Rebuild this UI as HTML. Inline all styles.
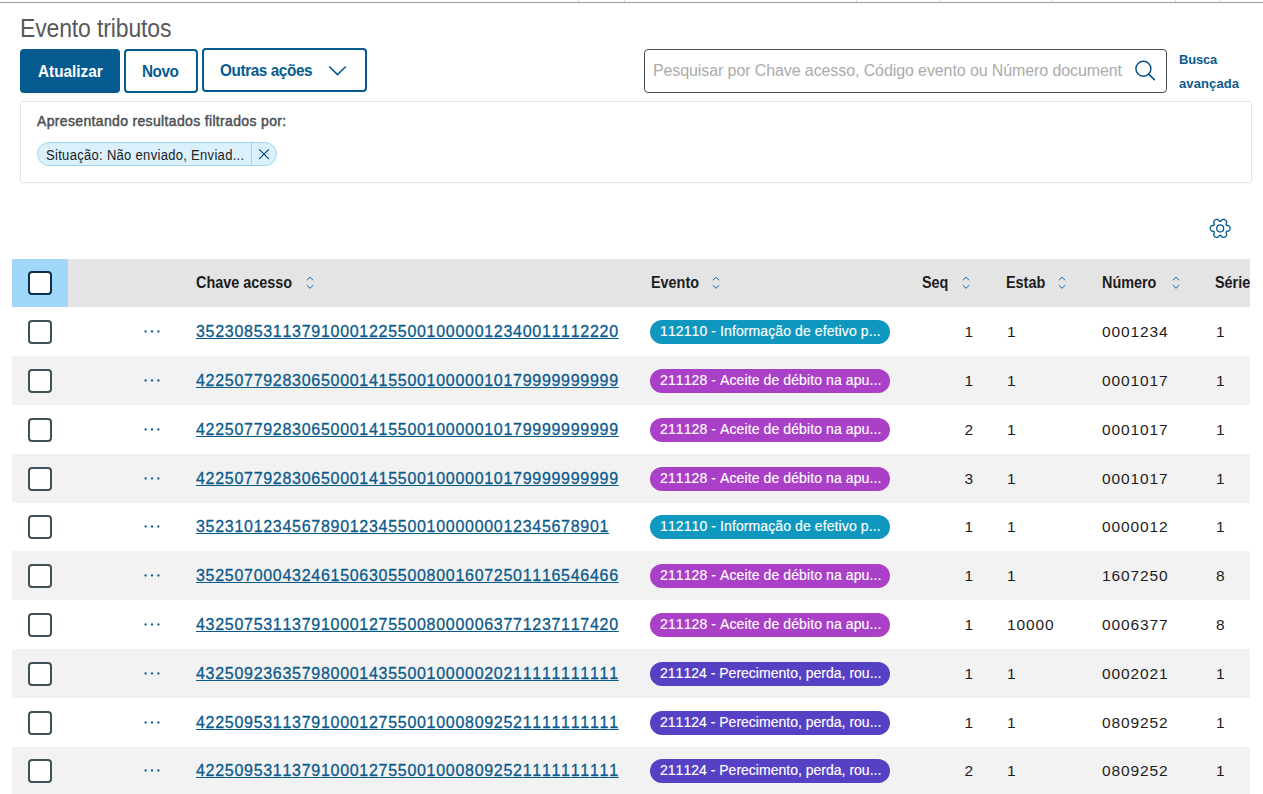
<!DOCTYPE html><html><head><meta charset="utf-8"><title>Evento tributos</title><style>
*{margin:0;padding:0;box-sizing:border-box}
html,body{width:1263px;height:794px;overflow:hidden;background:#fff}
body{position:relative;font-kerning:none;font-family:"Liberation Sans",sans-serif;color:#1c1c1c}
.a{position:absolute;white-space:nowrap}
.btn{position:absolute;top:49px;height:44px;border:2px solid #055b8f;border-radius:4px;background:#fff}
.cb{position:absolute;width:24px;height:24px;border:2px solid #3f5057;border-radius:4px;background:#fff}
.rowbg{position:absolute;left:12px;width:1238px;background:#f2f2f2}
.hd{font-size:16px;line-height:16px;font-weight:bold;color:#1c1c1c;transform:scaleX(0.9);transform-origin:0 0}
.lnk{font-size:16px;line-height:16px;color:#0b5a8c;text-decoration:underline;text-underline-offset:1px;text-decoration-thickness:1px;letter-spacing:0.71px;-webkit-text-stroke:0.3px #0b5a8c}
.val{font-size:15.5px;line-height:16px;color:#1c1c1c;letter-spacing:0.9px}
.tag{position:absolute;left:650px;width:240px;height:24px;border-radius:12px;color:#fff;font-size:14px;line-height:22px;padding-left:10px;letter-spacing:0.1px;white-space:nowrap;overflow:hidden;-webkit-text-stroke:0.15px #fff}
.dots{position:absolute;left:144px;width:16px;height:3px}
.dots i{position:absolute;top:0;width:2.2px;height:2.2px;border-radius:50%;background:#0b5a8c}
</style></head><body>
<div class="a" style="left:0;top:2px;width:1263px;height:1px;background:#9c9c9c"></div>
<div class="a" style="left:578px;top:0;width:1px;height:2px;background:#d6d6d6"></div>
<div class="a" style="left:624px;top:0;width:1px;height:2px;background:#d6d6d6"></div>
<div class="a" style="left:856px;top:0;width:1px;height:2px;background:#d6d6d6"></div>
<div class="a" style="left:940px;top:0;width:1px;height:2px;background:#d6d6d6"></div>
<div class="a" style="left:1051px;top:0;width:1px;height:2px;background:#d6d6d6"></div>
<div class="a" style="left:1175px;top:0;width:1px;height:2px;background:#d6d6d6"></div>
<div class="a" style="left:1220px;top:0;width:1px;height:2px;background:#d6d6d6"></div>
<div class="a" style="left:20px;top:15.53px;font-size:25px;line-height:25px;color:#595959;letter-spacing:-0.15px;transform:scaleX(0.92);transform-origin:0 0">Evento tributos</div>
<div class="btn" style="left:20px;width:100px;background:#055b8f"></div>
<div class="a" style="left:37.5px;top:62.81px;font-size:17px;line-height:17px;font-weight:bold;color:#fff;letter-spacing:0px;transform:scaleX(0.9);transform-origin:0 0">Atualizar</div>
<div class="btn" style="left:124px;width:74px"></div>
<div class="a" style="left:142px;top:62.81px;font-size:17px;line-height:17px;font-weight:bold;color:#055b8f;letter-spacing:-0.5px;transform:scaleX(0.9);transform-origin:0 0">Novo</div>
<div class="btn" style="left:202px;top:48px;width:165px"></div>
<div class="a" style="left:220px;top:62.31px;font-size:17px;line-height:17px;font-weight:bold;color:#055b8f;letter-spacing:-0.45px;transform:scaleX(0.9);transform-origin:0 0">Outras ações</div>
<svg class="a" style="left:328px;top:65px" width="19" height="11" viewBox="0 0 19 11"><path d="M1.2 1.5 L9.5 9.6 L17.8 1.5" fill="none" stroke="#055b8f" stroke-width="1.6"/></svg>
<div class="a" style="left:644px;top:49px;width:523px;height:44px;border:1px solid #4d4d4d;border-radius:4px"></div>
<div class="a" style="left:653px;top:63.05px;font-size:16px;line-height:16px;color:#ababab;letter-spacing:-0.1px">Pesquisar por Chave acesso, Código evento ou Número document</div>
<svg class="a" style="left:1133px;top:59px" width="24" height="24" viewBox="0 0 24 24"><circle cx="10.4" cy="9.8" r="7.5" fill="none" stroke="#044d84" stroke-width="1.4"/><path d="M15.7 15.1 L21.3 20.6" stroke="#044d84" stroke-width="1.6" stroke-linecap="round"/></svg>
<div class="a" style="left:1179px;top:52.99px;font-size:13px;line-height:13px;font-weight:bold;color:#0b5a8c;letter-spacing:-0.2px">Busca</div>
<div class="a" style="left:1179px;top:76.99px;font-size:13px;line-height:13px;font-weight:bold;color:#0b5a8c;letter-spacing:0.12px">avançada</div>
<div class="a" style="left:20px;top:101px;width:1232px;height:82px;border:1px solid #e3e3e3;border-radius:3px"></div>
<div class="a" style="left:37px;top:114.35px;font-size:14px;line-height:14px;color:#4a4f52;letter-spacing:0.34px;-webkit-text-stroke:0.45px #4a4f52">Apresentando resultados filtrados por:</div>
<div class="a" style="left:37px;top:142px;width:240px;height:24px;border:1px solid #9fd4ef;border-radius:12px;background:#daf1fc"></div>
<div class="a" style="left:251px;top:143px;width:1px;height:22px;background:#9fd4ef"></div>
<div class="a" style="left:46px;top:147.55px;font-size:14px;line-height:14px;color:#1c1c1c;letter-spacing:0.32px;transform:scaleX(0.93);transform-origin:0 0">Situação: Não enviado, Enviad...</div>
<svg class="a" style="left:257px;top:148px" width="14" height="14" viewBox="0 0 14 14"><path d="M2.2 1.3 L11.8 10.8 M11.8 1.3 L2.2 10.8" stroke="#053f74" stroke-width="1.15"/></svg>
<svg class="a" style="left:1208px;top:217px" width="24" height="24" viewBox="0 0 24 24"><path fill="none" stroke="#055b8f" stroke-width="1.3" stroke-linejoin="round" d="M22.10 11.40 L22.10 11.31 L22.10 11.23 L22.09 11.14 L22.08 11.05 L22.07 10.97 L22.06 10.88 L22.04 10.80 L22.02 10.71 L22.00 10.63 L21.98 10.54 L21.96 10.46 L21.93 10.38 L21.90 10.29 L21.87 10.21 L21.83 10.13 L21.80 10.05 L21.76 9.97 L21.72 9.89 L21.67 9.82 L21.62 9.74 L21.57 9.66 L21.52 9.59 L21.47 9.51 L21.41 9.44 L21.35 9.37 L21.28 9.30 L21.22 9.24 L21.15 9.17 L21.07 9.10 L21.00 9.04 L20.92 8.98 L20.83 8.92 L20.75 8.87 L20.66 8.81 L20.56 8.76 L20.46 8.72 L20.35 8.67 L20.24 8.63 L20.13 8.59 L20.00 8.56 L19.87 8.53 L19.72 8.51 L19.56 8.50 L19.37 8.50 L19.15 8.52 L18.74 8.63 L18.71 8.57 L18.69 8.51 L18.66 8.46 L18.63 8.40 L18.61 8.34 L18.58 8.29 L18.55 8.23 L18.53 8.18 L18.50 8.12 L18.47 8.07 L18.44 8.01 L18.41 7.96 L18.38 7.90 L18.35 7.85 L18.32 7.80 L18.29 7.74 L18.25 7.69 L18.22 7.64 L18.19 7.59 L18.15 7.53 L18.12 7.48 L18.09 7.43 L18.05 7.38 L18.02 7.33 L17.98 7.28 L17.94 7.23 L17.91 7.18 L17.87 7.13 L18.17 6.82 L18.30 6.64 L18.39 6.48 L18.46 6.33 L18.51 6.19 L18.56 6.06 L18.59 5.94 L18.62 5.82 L18.64 5.70 L18.65 5.59 L18.66 5.48 L18.67 5.37 L18.67 5.26 L18.66 5.16 L18.65 5.06 L18.64 4.96 L18.62 4.86 L18.61 4.77 L18.58 4.67 L18.56 4.58 L18.53 4.49 L18.50 4.40 L18.47 4.32 L18.43 4.23 L18.39 4.15 L18.35 4.07 L18.31 3.99 L18.26 3.91 L18.22 3.84 L18.17 3.76 L18.12 3.69 L18.06 3.62 L18.01 3.55 L17.95 3.48 L17.89 3.42 L17.83 3.36 L17.77 3.29 L17.71 3.23 L17.64 3.18 L17.58 3.12 L17.51 3.07 L17.44 3.02 L17.37 2.96 L17.30 2.92 L17.22 2.87 L17.15 2.83 L17.07 2.78 L17.00 2.74 L16.92 2.71 L16.84 2.67 L16.76 2.64 L16.68 2.60 L16.60 2.58 L16.52 2.55 L16.43 2.52 L16.35 2.50 L16.27 2.48 L16.18 2.46 L16.09 2.45 L16.01 2.43 L15.92 2.42 L15.83 2.41 L15.74 2.41 L15.65 2.41 L15.56 2.41 L15.47 2.41 L15.38 2.41 L15.29 2.42 L15.20 2.43 L15.11 2.45 L15.02 2.46 L14.93 2.48 L14.83 2.51 L14.74 2.54 L14.65 2.57 L14.56 2.60 L14.47 2.64 L14.37 2.68 L14.28 2.73 L14.19 2.78 L14.10 2.84 L14.01 2.90 L13.91 2.97 L13.82 3.05 L13.73 3.13 L13.64 3.23 L13.55 3.33 L13.46 3.44 L13.37 3.58 L13.28 3.74 L13.18 3.94 L13.07 4.35 L13.00 4.35 L12.94 4.34 L12.88 4.33 L12.82 4.33 L12.76 4.32 L12.70 4.32 L12.63 4.31 L12.57 4.31 L12.51 4.31 L12.45 4.30 L12.39 4.30 L12.32 4.30 L12.26 4.30 L12.20 4.30 L12.14 4.30 L12.08 4.30 L12.01 4.30 L11.95 4.30 L11.89 4.31 L11.83 4.31 L11.77 4.31 L11.70 4.32 L11.64 4.32 L11.58 4.33 L11.52 4.33 L11.46 4.34 L11.40 4.35 L11.33 4.35 L11.22 3.94 L11.12 3.74 L11.03 3.58 L10.94 3.44 L10.85 3.33 L10.76 3.23 L10.67 3.13 L10.58 3.05 L10.49 2.97 L10.39 2.90 L10.30 2.84 L10.21 2.78 L10.12 2.73 L10.03 2.68 L9.93 2.64 L9.84 2.60 L9.75 2.57 L9.66 2.54 L9.57 2.51 L9.47 2.48 L9.38 2.46 L9.29 2.45 L9.20 2.43 L9.11 2.42 L9.02 2.41 L8.93 2.41 L8.84 2.41 L8.75 2.41 L8.66 2.41 L8.57 2.41 L8.48 2.42 L8.39 2.43 L8.31 2.45 L8.22 2.46 L8.13 2.48 L8.05 2.50 L7.97 2.52 L7.88 2.55 L7.80 2.58 L7.72 2.60 L7.64 2.64 L7.56 2.67 L7.48 2.71 L7.40 2.74 L7.33 2.78 L7.25 2.83 L7.18 2.87 L7.10 2.92 L7.03 2.96 L6.96 3.02 L6.89 3.07 L6.82 3.12 L6.76 3.18 L6.69 3.23 L6.63 3.29 L6.57 3.36 L6.51 3.42 L6.45 3.48 L6.39 3.55 L6.34 3.62 L6.28 3.69 L6.23 3.76 L6.18 3.84 L6.14 3.91 L6.09 3.99 L6.05 4.07 L6.01 4.15 L5.97 4.23 L5.93 4.32 L5.90 4.40 L5.87 4.49 L5.84 4.58 L5.82 4.67 L5.79 4.77 L5.78 4.86 L5.76 4.96 L5.75 5.06 L5.74 5.16 L5.73 5.26 L5.73 5.37 L5.74 5.48 L5.75 5.59 L5.76 5.70 L5.78 5.82 L5.81 5.94 L5.84 6.06 L5.89 6.19 L5.94 6.33 L6.01 6.48 L6.10 6.64 L6.23 6.82 L6.53 7.13 L6.49 7.18 L6.46 7.23 L6.42 7.28 L6.38 7.33 L6.35 7.38 L6.31 7.43 L6.28 7.48 L6.25 7.53 L6.21 7.59 L6.18 7.64 L6.15 7.69 L6.11 7.74 L6.08 7.80 L6.05 7.85 L6.02 7.90 L5.99 7.96 L5.96 8.01 L5.93 8.07 L5.90 8.12 L5.87 8.18 L5.85 8.23 L5.82 8.29 L5.79 8.34 L5.77 8.40 L5.74 8.46 L5.71 8.51 L5.69 8.57 L5.66 8.63 L5.25 8.52 L5.03 8.50 L4.84 8.50 L4.68 8.51 L4.53 8.53 L4.40 8.56 L4.27 8.59 L4.16 8.63 L4.05 8.67 L3.94 8.72 L3.84 8.76 L3.74 8.81 L3.65 8.87 L3.57 8.92 L3.48 8.98 L3.40 9.04 L3.33 9.10 L3.25 9.17 L3.18 9.24 L3.12 9.30 L3.05 9.37 L2.99 9.44 L2.93 9.51 L2.88 9.59 L2.83 9.66 L2.78 9.74 L2.73 9.82 L2.68 9.89 L2.64 9.97 L2.60 10.05 L2.57 10.13 L2.53 10.21 L2.50 10.29 L2.47 10.38 L2.44 10.46 L2.42 10.54 L2.40 10.63 L2.38 10.71 L2.36 10.80 L2.34 10.88 L2.33 10.97 L2.32 11.05 L2.31 11.14 L2.30 11.23 L2.30 11.31 L2.30 11.40 L2.30 11.49 L2.30 11.57 L2.31 11.66 L2.32 11.75 L2.33 11.83 L2.34 11.92 L2.36 12.00 L2.38 12.09 L2.40 12.17 L2.42 12.26 L2.44 12.34 L2.47 12.42 L2.50 12.51 L2.53 12.59 L2.57 12.67 L2.60 12.75 L2.64 12.83 L2.68 12.91 L2.73 12.98 L2.78 13.06 L2.83 13.14 L2.88 13.21 L2.93 13.29 L2.99 13.36 L3.05 13.43 L3.12 13.50 L3.18 13.56 L3.25 13.63 L3.33 13.70 L3.40 13.76 L3.48 13.82 L3.57 13.88 L3.65 13.93 L3.74 13.99 L3.84 14.04 L3.94 14.08 L4.05 14.13 L4.16 14.17 L4.27 14.21 L4.40 14.24 L4.53 14.27 L4.68 14.29 L4.84 14.30 L5.03 14.30 L5.25 14.28 L5.66 14.17 L5.69 14.23 L5.71 14.29 L5.74 14.34 L5.77 14.40 L5.79 14.46 L5.82 14.51 L5.85 14.57 L5.87 14.62 L5.90 14.68 L5.93 14.73 L5.96 14.79 L5.99 14.84 L6.02 14.90 L6.05 14.95 L6.08 15.00 L6.11 15.06 L6.15 15.11 L6.18 15.16 L6.21 15.21 L6.25 15.27 L6.28 15.32 L6.31 15.37 L6.35 15.42 L6.38 15.47 L6.42 15.52 L6.46 15.57 L6.49 15.62 L6.53 15.67 L6.23 15.98 L6.10 16.16 L6.01 16.32 L5.94 16.47 L5.89 16.61 L5.84 16.74 L5.81 16.86 L5.78 16.98 L5.76 17.10 L5.75 17.21 L5.74 17.32 L5.73 17.43 L5.73 17.54 L5.74 17.64 L5.75 17.74 L5.76 17.84 L5.78 17.94 L5.79 18.03 L5.82 18.13 L5.84 18.22 L5.87 18.31 L5.90 18.40 L5.93 18.48 L5.97 18.57 L6.01 18.65 L6.05 18.73 L6.09 18.81 L6.14 18.89 L6.18 18.96 L6.23 19.04 L6.28 19.11 L6.34 19.18 L6.39 19.25 L6.45 19.32 L6.51 19.38 L6.57 19.44 L6.63 19.51 L6.69 19.57 L6.76 19.62 L6.82 19.68 L6.89 19.73 L6.96 19.78 L7.03 19.84 L7.10 19.88 L7.18 19.93 L7.25 19.97 L7.33 20.02 L7.40 20.06 L7.48 20.09 L7.56 20.13 L7.64 20.16 L7.72 20.20 L7.80 20.22 L7.88 20.25 L7.97 20.28 L8.05 20.30 L8.13 20.32 L8.22 20.34 L8.31 20.35 L8.39 20.37 L8.48 20.38 L8.57 20.39 L8.66 20.39 L8.75 20.39 L8.84 20.39 L8.93 20.39 L9.02 20.39 L9.11 20.38 L9.20 20.37 L9.29 20.35 L9.38 20.34 L9.47 20.32 L9.57 20.29 L9.66 20.26 L9.75 20.23 L9.84 20.20 L9.93 20.16 L10.03 20.12 L10.12 20.07 L10.21 20.02 L10.30 19.96 L10.39 19.90 L10.49 19.83 L10.58 19.75 L10.67 19.67 L10.76 19.57 L10.85 19.47 L10.94 19.36 L11.03 19.22 L11.12 19.06 L11.22 18.86 L11.33 18.45 L11.40 18.45 L11.46 18.46 L11.52 18.47 L11.58 18.47 L11.64 18.48 L11.70 18.48 L11.77 18.49 L11.83 18.49 L11.89 18.49 L11.95 18.50 L12.01 18.50 L12.08 18.50 L12.14 18.50 L12.20 18.50 L12.26 18.50 L12.32 18.50 L12.39 18.50 L12.45 18.50 L12.51 18.49 L12.57 18.49 L12.63 18.49 L12.70 18.48 L12.76 18.48 L12.82 18.47 L12.88 18.47 L12.94 18.46 L13.00 18.45 L13.07 18.45 L13.18 18.86 L13.28 19.06 L13.37 19.22 L13.46 19.36 L13.55 19.47 L13.64 19.57 L13.73 19.67 L13.82 19.75 L13.91 19.83 L14.01 19.90 L14.10 19.96 L14.19 20.02 L14.28 20.07 L14.37 20.12 L14.47 20.16 L14.56 20.20 L14.65 20.23 L14.74 20.26 L14.83 20.29 L14.93 20.32 L15.02 20.34 L15.11 20.35 L15.20 20.37 L15.29 20.38 L15.38 20.39 L15.47 20.39 L15.56 20.39 L15.65 20.39 L15.74 20.39 L15.83 20.39 L15.92 20.38 L16.01 20.37 L16.09 20.35 L16.18 20.34 L16.27 20.32 L16.35 20.30 L16.43 20.28 L16.52 20.25 L16.60 20.22 L16.68 20.20 L16.76 20.16 L16.84 20.13 L16.92 20.09 L17.00 20.06 L17.07 20.02 L17.15 19.97 L17.22 19.93 L17.30 19.88 L17.37 19.84 L17.44 19.78 L17.51 19.73 L17.58 19.68 L17.64 19.62 L17.71 19.57 L17.77 19.51 L17.83 19.44 L17.89 19.38 L17.95 19.32 L18.01 19.25 L18.06 19.18 L18.12 19.11 L18.17 19.04 L18.22 18.96 L18.26 18.89 L18.31 18.81 L18.35 18.73 L18.39 18.65 L18.43 18.57 L18.47 18.48 L18.50 18.40 L18.53 18.31 L18.56 18.22 L18.58 18.13 L18.61 18.03 L18.62 17.94 L18.64 17.84 L18.65 17.74 L18.66 17.64 L18.67 17.54 L18.67 17.43 L18.66 17.32 L18.65 17.21 L18.64 17.10 L18.62 16.98 L18.59 16.86 L18.56 16.74 L18.51 16.61 L18.46 16.47 L18.39 16.32 L18.30 16.16 L18.17 15.98 L17.87 15.67 L17.91 15.62 L17.94 15.57 L17.98 15.52 L18.02 15.47 L18.05 15.42 L18.09 15.37 L18.12 15.32 L18.15 15.27 L18.19 15.21 L18.22 15.16 L18.25 15.11 L18.29 15.06 L18.32 15.00 L18.35 14.95 L18.38 14.90 L18.41 14.84 L18.44 14.79 L18.47 14.73 L18.50 14.68 L18.53 14.62 L18.55 14.57 L18.58 14.51 L18.61 14.46 L18.63 14.40 L18.66 14.34 L18.69 14.29 L18.71 14.23 L18.74 14.17 L19.15 14.28 L19.37 14.30 L19.56 14.30 L19.72 14.29 L19.87 14.27 L20.00 14.24 L20.13 14.21 L20.24 14.17 L20.35 14.13 L20.46 14.08 L20.56 14.04 L20.66 13.99 L20.75 13.93 L20.83 13.88 L20.92 13.82 L21.00 13.76 L21.07 13.70 L21.15 13.63 L21.22 13.56 L21.28 13.50 L21.35 13.43 L21.41 13.36 L21.47 13.29 L21.52 13.21 L21.57 13.14 L21.62 13.06 L21.67 12.98 L21.72 12.91 L21.76 12.83 L21.80 12.75 L21.83 12.67 L21.87 12.59 L21.90 12.51 L21.93 12.42 L21.96 12.34 L21.98 12.26 L22.00 12.17 L22.02 12.09 L22.04 12.00 L22.06 11.92 L22.07 11.83 L22.08 11.75 L22.09 11.66 L22.10 11.57 L22.10 11.49Z"/><circle cx="12.2" cy="11.4" r="3.45" fill="none" stroke="#055b8f" stroke-width="1.3"/></svg>
<div class="a" style="left:12px;top:259px;width:1238px;height:48px;background:#e4e4e4"></div>
<div class="a" style="left:12px;top:259px;width:56px;height:48px;background:#9fd8fa"></div>
<div class="cb" style="left:28px;top:271px;border-color:#0b2e4c"></div>
<div class="a hd" style="left:196px;top:274.95px">Chave acesso</div>
<svg class="a" style="left:306px;top:276px" width="8" height="14" viewBox="0 0 8 14"><path d="M0.8 4.3 L4 1.2 L7.2 4.3 M0.8 9.2 L4 12.3 L7.2 9.2" fill="none" stroke="#1a68a6" stroke-width="1.0"/></svg>
<div class="a hd" style="left:651px;top:274.95px">Evento</div>
<svg class="a" style="left:712px;top:276px" width="8" height="14" viewBox="0 0 8 14"><path d="M0.8 4.3 L4 1.2 L7.2 4.3 M0.8 9.2 L4 12.3 L7.2 9.2" fill="none" stroke="#1a68a6" stroke-width="1.0"/></svg>
<div class="a hd" style="left:922px;top:274.95px">Seq</div>
<svg class="a" style="left:962px;top:276px" width="8" height="14" viewBox="0 0 8 14"><path d="M0.8 4.3 L4 1.2 L7.2 4.3 M0.8 9.2 L4 12.3 L7.2 9.2" fill="none" stroke="#1a68a6" stroke-width="1.0"/></svg>
<div class="a hd" style="left:1006px;top:274.95px">Estab</div>
<svg class="a" style="left:1058px;top:276px" width="8" height="14" viewBox="0 0 8 14"><path d="M0.8 4.3 L4 1.2 L7.2 4.3 M0.8 9.2 L4 12.3 L7.2 9.2" fill="none" stroke="#1a68a6" stroke-width="1.0"/></svg>
<div class="a hd" style="left:1102px;top:274.95px">Número</div>
<svg class="a" style="left:1172px;top:276px" width="8" height="14" viewBox="0 0 8 14"><path d="M0.8 4.3 L4 1.2 L7.2 4.3 M0.8 9.2 L4 12.3 L7.2 9.2" fill="none" stroke="#1a68a6" stroke-width="1.0"/></svg>
<div class="a hd" style="left:1215px;top:274.95px">Série</div>
<div class="cb" style="left:28px;top:320px"></div>
<svg class="a" style="left:140px;top:327px" width="24" height="10" viewBox="0 0 24 10"><circle cx="5.6" cy="4.5" r="1.15" fill="#0b5a8c"/><circle cx="12" cy="4.5" r="1.15" fill="#0b5a8c"/><circle cx="18.4" cy="4.5" r="1.15" fill="#0b5a8c"/></svg>
<div class="a lnk" style="left:196px;top:324.354px">35230853113791000122550010000012340011112220</div>
<div class="tag" style="top:320px;background:#0e98bf">112110 - Informação de efetivo p...</div>
<div class="a val" style="left:900px;width:74px;text-align:right;top:323.527px">1</div>
<div class="a val" style="left:1007px;top:323.527px">1</div>
<div class="a val" style="left:1102px;top:323.527px">0001234</div>
<div class="a val" style="left:1216px;top:323.527px">1</div>
<div class="rowbg" style="top:356px;height:49px"></div>
<div class="cb" style="left:28px;top:369px"></div>
<svg class="a" style="left:140px;top:376px" width="24" height="10" viewBox="0 0 24 10"><circle cx="5.6" cy="4.5" r="1.15" fill="#0b5a8c"/><circle cx="12" cy="4.5" r="1.15" fill="#0b5a8c"/><circle cx="18.4" cy="4.5" r="1.15" fill="#0b5a8c"/></svg>
<div class="a lnk" style="left:196px;top:373.354px">42250779283065000141550010000010179999999999</div>
<div class="tag" style="top:369px;background:#aa40c8">211128 - Aceite de débito na apu...</div>
<div class="a val" style="left:900px;width:74px;text-align:right;top:372.527px">1</div>
<div class="a val" style="left:1007px;top:372.527px">1</div>
<div class="a val" style="left:1102px;top:372.527px">0001017</div>
<div class="a val" style="left:1216px;top:372.527px">1</div>
<div class="cb" style="left:28px;top:418px"></div>
<svg class="a" style="left:140px;top:425px" width="24" height="10" viewBox="0 0 24 10"><circle cx="5.6" cy="4.5" r="1.15" fill="#0b5a8c"/><circle cx="12" cy="4.5" r="1.15" fill="#0b5a8c"/><circle cx="18.4" cy="4.5" r="1.15" fill="#0b5a8c"/></svg>
<div class="a lnk" style="left:196px;top:422.354px">42250779283065000141550010000010179999999999</div>
<div class="tag" style="top:418px;background:#aa40c8">211128 - Aceite de débito na apu...</div>
<div class="a val" style="left:900px;width:74px;text-align:right;top:421.527px">2</div>
<div class="a val" style="left:1007px;top:421.527px">1</div>
<div class="a val" style="left:1102px;top:421.527px">0001017</div>
<div class="a val" style="left:1216px;top:421.527px">1</div>
<div class="rowbg" style="top:454px;height:49px"></div>
<div class="cb" style="left:28px;top:467px"></div>
<svg class="a" style="left:140px;top:474px" width="24" height="10" viewBox="0 0 24 10"><circle cx="5.6" cy="4.5" r="1.15" fill="#0b5a8c"/><circle cx="12" cy="4.5" r="1.15" fill="#0b5a8c"/><circle cx="18.4" cy="4.5" r="1.15" fill="#0b5a8c"/></svg>
<div class="a lnk" style="left:196px;top:471.354px">42250779283065000141550010000010179999999999</div>
<div class="tag" style="top:467px;background:#aa40c8">211128 - Aceite de débito na apu...</div>
<div class="a val" style="left:900px;width:74px;text-align:right;top:470.527px">3</div>
<div class="a val" style="left:1007px;top:470.527px">1</div>
<div class="a val" style="left:1102px;top:470.527px">0001017</div>
<div class="a val" style="left:1216px;top:470.527px">1</div>
<div class="cb" style="left:28px;top:515px"></div>
<svg class="a" style="left:140px;top:522px" width="24" height="10" viewBox="0 0 24 10"><circle cx="5.6" cy="4.5" r="1.15" fill="#0b5a8c"/><circle cx="12" cy="4.5" r="1.15" fill="#0b5a8c"/><circle cx="18.4" cy="4.5" r="1.15" fill="#0b5a8c"/></svg>
<div class="a lnk" style="left:196px;top:519.354px">3523101234567890123455001000000012345678901</div>
<div class="tag" style="top:515px;background:#0e98bf">112110 - Informação de efetivo p...</div>
<div class="a val" style="left:900px;width:74px;text-align:right;top:518.527px">1</div>
<div class="a val" style="left:1007px;top:518.527px">1</div>
<div class="a val" style="left:1102px;top:518.527px">0000012</div>
<div class="a val" style="left:1216px;top:518.527px">1</div>
<div class="rowbg" style="top:551px;height:49px"></div>
<div class="cb" style="left:28px;top:564px"></div>
<svg class="a" style="left:140px;top:571px" width="24" height="10" viewBox="0 0 24 10"><circle cx="5.6" cy="4.5" r="1.15" fill="#0b5a8c"/><circle cx="12" cy="4.5" r="1.15" fill="#0b5a8c"/><circle cx="18.4" cy="4.5" r="1.15" fill="#0b5a8c"/></svg>
<div class="a lnk" style="left:196px;top:568.354px">35250700043246150630550080016072501116546466</div>
<div class="tag" style="top:564px;background:#aa40c8">211128 - Aceite de débito na apu...</div>
<div class="a val" style="left:900px;width:74px;text-align:right;top:567.527px">1</div>
<div class="a val" style="left:1007px;top:567.527px">1</div>
<div class="a val" style="left:1102px;top:567.527px">1607250</div>
<div class="a val" style="left:1216px;top:567.527px">8</div>
<div class="cb" style="left:28px;top:613px"></div>
<svg class="a" style="left:140px;top:620px" width="24" height="10" viewBox="0 0 24 10"><circle cx="5.6" cy="4.5" r="1.15" fill="#0b5a8c"/><circle cx="12" cy="4.5" r="1.15" fill="#0b5a8c"/><circle cx="18.4" cy="4.5" r="1.15" fill="#0b5a8c"/></svg>
<div class="a lnk" style="left:196px;top:617.354px">43250753113791000127550080000063771237117420</div>
<div class="tag" style="top:613px;background:#aa40c8">211128 - Aceite de débito na apu...</div>
<div class="a val" style="left:900px;width:74px;text-align:right;top:616.527px">1</div>
<div class="a val" style="left:1007px;top:616.527px">10000</div>
<div class="a val" style="left:1102px;top:616.527px">0006377</div>
<div class="a val" style="left:1216px;top:616.527px">8</div>
<div class="rowbg" style="top:649px;height:49px"></div>
<div class="cb" style="left:28px;top:662px"></div>
<svg class="a" style="left:140px;top:669px" width="24" height="10" viewBox="0 0 24 10"><circle cx="5.6" cy="4.5" r="1.15" fill="#0b5a8c"/><circle cx="12" cy="4.5" r="1.15" fill="#0b5a8c"/><circle cx="18.4" cy="4.5" r="1.15" fill="#0b5a8c"/></svg>
<div class="a lnk" style="left:196px;top:666.354px">43250923635798000143550010000020211111111111</div>
<div class="tag" style="top:662px;background:#5640c4;letter-spacing:0.01px">211124 - Perecimento, perda, rou...</div>
<div class="a val" style="left:900px;width:74px;text-align:right;top:665.527px">1</div>
<div class="a val" style="left:1007px;top:665.527px">1</div>
<div class="a val" style="left:1102px;top:665.527px">0002021</div>
<div class="a val" style="left:1216px;top:665.527px">1</div>
<div class="cb" style="left:28px;top:711px"></div>
<svg class="a" style="left:140px;top:718px" width="24" height="10" viewBox="0 0 24 10"><circle cx="5.6" cy="4.5" r="1.15" fill="#0b5a8c"/><circle cx="12" cy="4.5" r="1.15" fill="#0b5a8c"/><circle cx="18.4" cy="4.5" r="1.15" fill="#0b5a8c"/></svg>
<div class="a lnk" style="left:196px;top:715.354px">42250953113791000127550010008092521111111111</div>
<div class="tag" style="top:711px;background:#5640c4;letter-spacing:0.01px">211124 - Perecimento, perda, rou...</div>
<div class="a val" style="left:900px;width:74px;text-align:right;top:714.527px">1</div>
<div class="a val" style="left:1007px;top:714.527px">1</div>
<div class="a val" style="left:1102px;top:714.527px">0809252</div>
<div class="a val" style="left:1216px;top:714.527px">1</div>
<div class="rowbg" style="top:747px;height:49px"></div>
<div class="cb" style="left:28px;top:759px"></div>
<svg class="a" style="left:140px;top:766px" width="24" height="10" viewBox="0 0 24 10"><circle cx="5.6" cy="4.5" r="1.15" fill="#0b5a8c"/><circle cx="12" cy="4.5" r="1.15" fill="#0b5a8c"/><circle cx="18.4" cy="4.5" r="1.15" fill="#0b5a8c"/></svg>
<div class="a lnk" style="left:196px;top:763.354px">42250953113791000127550010008092521111111111</div>
<div class="tag" style="top:759px;background:#5640c4;letter-spacing:0.01px">211124 - Perecimento, perda, rou...</div>
<div class="a val" style="left:900px;width:74px;text-align:right;top:762.527px">2</div>
<div class="a val" style="left:1007px;top:762.527px">1</div>
<div class="a val" style="left:1102px;top:762.527px">0809252</div>
<div class="a val" style="left:1216px;top:762.527px">1</div>
<div class="a" style="left:1250px;top:250px;width:13px;height:544px;background:#fff"></div>
</body></html>
